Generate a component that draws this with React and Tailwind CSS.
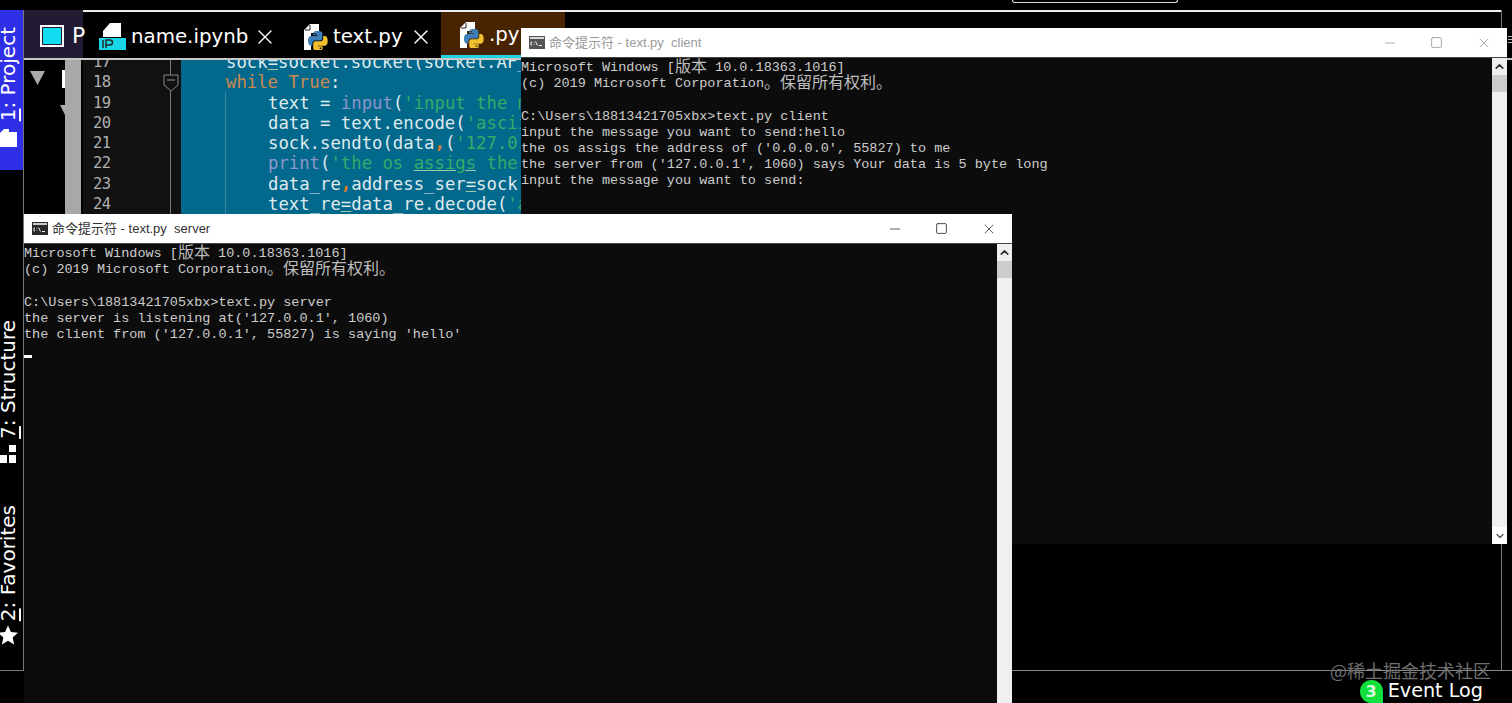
import { Minus, Square, X, ChevronUp, ChevronDown } from 'lucide-react';

const PY_PATH = 'M11.9 0C5.8 0 6.2 2.6 6.2 2.6v2.7h5.8v.8H3.9S0 5.7 0 11.9s3.4 6 3.4 6h2v-2.9s-.1-3.4 3.3-3.4h5.7s3.2.1 3.2-3.1V3.2S18.1 0 11.9 0zM8.7 1.9a1 1 0 1 1 0 2.1 1 1 0 0 1 0-2.1z';

const PyFileIcon = () => (
  <svg width="24" height="26" viewBox="0 0 24 26" className="shrink-0">
    <path d="M6 0h9v9H7v17H0V6z" fill="#fff" />
    <path d="M6 1v5H1" stroke="#222" strokeWidth="1" fill="none" />
    <g transform="translate(4 7) scale(0.82)">
      <path d={PY_PATH} fill="#3d7fb8" />
      <path d={PY_PATH} fill="#f2c02e" transform="rotate(180 12 12)" />
    </g>
  </svg>
);

const NotebookIcon = () => (
  <svg width="27" height="27" viewBox="0 0 27 27" className="shrink-0">
    <path d="M11 0h11v14H4v-6z" fill="#fff" />
    <rect x="0" y="15" width="27" height="12" fill="#19d6e6" />
    <path d="M4 17v8M7 25v-8h4a2 2 0 0 1 0 5H7" stroke="#222" strokeWidth="1.4" fill="none" />
  </svg>
);

const CmdIcon = ({ dim }) => (
  <svg width="16" height="13" viewBox="0 0 16 13" className={`shrink-0 ${dim ? 'opacity-80' : ''}`}>
    <rect width="16" height="13" fill="#2a2a2a" />
    <rect x="1" y="1" width="14" height="2" fill="#ccc" />
    <path d="M3 6H2v3h1M5 6.5v.5M5 8.5v.5M6.5 5.5 8.5 9.5M10 9.5h3" stroke="#eee" strokeWidth="1" fill="none" />
  </svg>
);

const Cjk = ({ children }) => (
  <span className="relative top-[1px] text-[16px] leading-[0] text-[#bdbdbd] font-['Noto_Sans_CJK_SC',sans-serif]">{children}</span>
);

const ConsoleWindow = ({ title, inactive, className, lines, cursor, showDownArrow }) => (
  <div className={`absolute flex flex-col overflow-hidden ${className}`}>
    <div className="h-[30px] shrink-0 flex items-center bg-white border-b border-[#444] pl-[8px]">
      <CmdIcon dim={inactive} />
      <span className={`ml-[4px] text-[13px] whitespace-pre font-['Liberation_Sans','Noto_Sans_CJK_SC',sans-serif] ${inactive ? 'text-[#9a9a9a]' : 'text-[#333]'}`}>
        {title}
      </span>
      <div className={`ml-auto flex ${inactive ? 'text-[#9a9a9a]' : 'text-[#333]'}`}>
        <div className="w-[47px] flex justify-center"><Minus size={16} strokeWidth={1.2} /></div>
        <div className="w-[47px] flex justify-center"><Square size={13} strokeWidth={1.6} className="my-[1.5px]" /></div>
        <div className="w-[47px] flex justify-center"><X size={16} strokeWidth={1.2} /></div>
      </div>
    </div>
    <div className="flex-1 flex min-h-0">
      <div className="flex-1 bg-[#0c0c0c] text-[#cccccc] text-[13.5px] leading-[16.2px] pt-[2px] whitespace-pre font-['Liberation_Mono',monospace]">
        {lines.map((line, i) => (
          <div key={i} className="h-[16.2px]">{line}</div>
        ))}
        {cursor && <div className="w-[8px] h-[3px] bg-white mt-[12px]" />}
      </div>
      <div className="w-[15px] bg-[#f0f0f0] flex flex-col">
        <div className="h-[17px] flex items-center justify-center text-[#333]"><ChevronUp size={13} strokeWidth={3} /></div>
        <div className="h-[17px] bg-[#cdcdcd]" />
        {showDownArrow && (
          <div className="mt-auto h-[17px] bg-white flex items-center justify-center text-[#555]"><ChevronDown size={12} strokeWidth={2.5} /></div>
        )}
      </div>
    </div>
  </div>
);

const Kw = ({ children }) => <span className="text-[#cc8a4f]">{children}</span>;
const Fn = ({ children }) => <span className="text-[#8d96cb]">{children}</span>;
const Str = ({ children }) => <span className="text-[#35ab68]">{children}</span>;
const Com = () => <span className="text-[#e07b2c] font-bold">,</span>;
const Eq = () => <span className="underline decoration-[#9fc9a8]">=</span>;

const codeLines = [
  { n: 17, indent: 0, code: <>sock<Eq />socket.socket(socket.AF_INET,</> },
  { n: 18, indent: 0, code: <><Kw>while True</Kw>:</> },
  { n: 19, indent: 1, code: <>text = <Fn>input</Fn>(<Str>'input the message'</Str></> },
  { n: 20, indent: 1, code: <>data = text.encode(<Str>'ascii'</Str>)</> },
  { n: 21, indent: 1, code: <>sock.sendto(data<Com />(<Str>'127.0.0.1'</Str></> },
  { n: 22, indent: 1, code: <><Fn>print</Fn>(<Str>'the os <span className="underline decoration-[#9fc9a8]">assigs</span> the address'</Str></> },
  { n: 23, indent: 1, code: <>data_re<Com />address_ser<Eq />sock.recvfrom</> },
  { n: 24, indent: 1, code: <>text_re<Eq />data_re.decode(<Str>'ascii'</Str>)</> },
  { n: 25, indent: 1, code: <></> },
];

const RailLabel = ({ num, name, className }) => (
  <span className={`[writing-mode:vertical-rl] rotate-180 text-[20px] leading-[16px] text-white whitespace-pre font-['DejaVu_Sans',sans-serif] ${className}`}>
    <span className="underline">{num}</span>: {name}
  </span>
);

const clientLines = [
  <>Microsoft Windows [<Cjk>版本</Cjk> 10.0.18363.1016]</>,
  <>(c) 2019 Microsoft Corporation<Cjk>。保留所有权利。</Cjk></>,
  '',
  'C:\\Users\\18813421705xbx>text.py client',
  'input the message you want to send:hello',
  "the os assigs the address of ('0.0.0.0', 55827) to me",
  "the server from ('127.0.0.1', 1060) says Your data is 5 byte long",
  'input the message you want to send:',
];

const serverLines = [
  <>Microsoft Windows [<Cjk>版本</Cjk> 10.0.18363.1016]</>,
  <>(c) 2019 Microsoft Corporation<Cjk>。保留所有权利。</Cjk></>,
  '',
  'C:\\Users\\18813421705xbx>text.py server',
  "the server is listening at('127.0.0.1', 1060)",
  "the client from ('127.0.0.1', 55827) is saying 'hello'",
];

export default function App() {
  return (
    <div className="relative h-screen w-full overflow-hidden bg-black flex flex-col font-['DejaVu_Sans',sans-serif]">
      {/* top strip */}
      <div className="h-[10px] shrink-0">
        <div className="ml-[1012px] w-[166px] h-[3px] border-x border-b border-[#ddd] rounded-b-[3px]" />
      </div>

      <div className="flex h-[661px] shrink-0">
        {/* tool window rail */}
        <div className="w-[24px] shrink-0 flex flex-col border-r border-b border-[#777]">
          <div className="h-[160px] bg-[#2f2fe8] flex flex-col items-start pt-[17px] gap-[8px]">
            <RailLabel num="1" name="Project" />
            <svg width="17" height="18" viewBox="0 0 17 18" className="shrink-0">
              <path d="M0 4l4-4h5v3h8v15H0z" fill="#fff" />
            </svg>
          </div>
          <div className="mt-[150px] flex flex-col items-start gap-[6px]">
            <RailLabel num="7" name="Structure" />
            <svg width="16" height="18" viewBox="0 0 16 18" className="shrink-0">
              <path d="M9 0h7v7H9zM0 10h7v8H0zM9 10h7v8H9z" fill="#fff" />
            </svg>
          </div>
          <div className="mt-[42px] flex flex-col items-start gap-[4px]">
            <RailLabel num="2" name="Favorites" />
            <svg width="20" height="21" viewBox="0 0 20 20" className="shrink-0 -ml-[2px]">
              <path d="M10 0l2.9 6.6 7.1.7-5.4 4.7 1.6 7L10 15.300l-6.200 3.700 1.600-7L0 7.300l7.100-.7z" fill="#fff" />
            </svg>
          </div>
        </div>

        {/* ide body */}
        <div className="flex-1 min-w-0 flex flex-col border-b border-[#888]">
          {/* tab strip */}
          <div className="h-[50px] shrink-0 flex border-b-2 border-[#c8c8c8]">
            <div className="w-[59px] shrink-0 bg-[#231a33] flex items-center pl-[16px] pt-[3px] gap-[8px] text-white text-[22px]">
              <div className="w-[24px] h-[22px] border-2 border-white bg-[#12dcf0] shrink-0 outline outline-[#231a33] -outline-offset-3" />
              <span>P</span>
            </div>
            <div className="w-[1418px] border-t-2 border-[#eee] flex text-white text-[19.800px]">
              <div className="w-[221px] flex items-center pl-[16px] pt-[3px]">
                <NotebookIcon />
                <span className="ml-[5px]">name.ipynb</span>
                <X size={24} strokeWidth={1.4} className="ml-[5px]" />
              </div>
              <div className="w-[137px] flex items-center pt-[3px]">
                <PyFileIcon />
                <span className="ml-[5px]">text.py</span>
                <X size={24} strokeWidth={1.4} className="ml-[6px]" />
              </div>
              <div className="w-[124px] flex items-center pl-[19px] pt-[3px] bg-[#472300] border-b-[3px] border-[#22d3e6]">
                <PyFileIcon />
                <span className="ml-[5px]">.py</span>
              </div>
            </div>
            <div className="flex-1 border-l border-[#777] flex flex-col items-end gap-[2px] pt-[26px]">
              <div className="w-[4px] h-px bg-[#bbb]" />
              <div className="w-[4px] h-px bg-[#bbb]" />
              <div className="w-[4px] h-px bg-[#bbb]" />
            </div>
          </div>

          {/* editor */}
          <div className="flex-1 min-h-0 flex overflow-hidden">
            <div className="w-[41px] shrink-0 relative">
              <svg width="15" height="14" viewBox="0 0 15 14" className="mt-[11px] ml-[6px]">
                <path d="M0 0h15L7.500 14z" fill="#aaa" />
              </svg>
              <div className="absolute left-[38px] top-[10px] w-[3px] h-[18px] bg-white" />
              <svg width="5" height="10" viewBox="0 0 5 10" className="absolute left-[36px] top-[45px]">
                <path d="M0 0h5v10z" fill="#aaa" />
              </svg>
            </div>
            <div className="w-[16px] shrink-0 bg-[#a8a8a8]" />
            <div className="w-[2px] shrink-0" />
            <div className="w-[98px] shrink-0 bg-[#111111] relative overflow-hidden text-[#b0b0b0] text-[15.500px] tracking-[-0.5px] leading-[20.250px] font-['DejaVu_Sans_Mono',monospace]">
              <div className="absolute left-[87px] top-0 bottom-0 w-px bg-[#777]" />
              <svg width="16" height="18" viewBox="0 0 16 18" className="absolute left-[80px] top-[14px]">
                <path d="M1 1h14v10l-7 6-7-6z" fill="#111" stroke="#888" strokeWidth="1" />
                <path d="M4 6h8" stroke="#999" strokeWidth="1" />
              </svg>
              <div className="-mt-[8px] pl-[10px]">
                {codeLines.map((l) => (
                  <div key={l.n} className="h-[20.250px]">{l.n}</div>
                ))}
              </div>
            </div>
            <div className="w-[340px] shrink-0 bg-[#02688c] relative overflow-hidden text-[#dfeaec] text-[17.300px] leading-[20.250px] font-['DejaVu_Sans_Mono',monospace]">
              <div className="absolute left-[44px] top-[32px] bottom-0 w-px bg-[#3d86a0]" />
              <div className="-mt-[8px] pl-[45px] whitespace-pre">
                {codeLines.map((l) => (
                  <div key={l.n} className={`h-[20.250px] ${l.indent ? 'pl-[42px]' : ''}`}>{l.code}</div>
                ))}
              </div>
            </div>
            <div className="flex-1" />
            <div className="w-[11px] shrink-0 border-l border-[#777]" />
          </div>
        </div>
      </div>

      {/* status bar */}
      <div className="flex-1 flex items-end justify-end pr-[29px] text-white">
        <div className="w-[23px] h-[23px] rounded-full rounded-br-[4px] bg-[#10e03c] flex items-center justify-center text-[16px] font-bold text-[#d8f8dc]">3</div>
        <span className="ml-[5px] text-[19.200px] leading-[25px]">Event Log</span>
      </div>

      {/* console windows */}
      <ConsoleWindow
        title="命令提示符 - text.py  client"
        inactive
        showDownArrow
        className="left-[521px] top-[28px] w-[986px] h-[516px]"
        lines={clientLines}
      />
      <ConsoleWindow
        title="命令提示符 - text.py  server"
        className="left-[24px] top-[214px] w-[988px] h-[520px]"
        lines={serverLines}
        cursor
      />

      {/* watermark */}
      <span className="absolute left-[1330px] top-[658px] text-[18px] leading-[24px] text-[#6f6f6f] whitespace-pre font-['Noto_Sans_CJK_SC',sans-serif]">@稀土掘金技术社区</span>
    </div>
  );
}
